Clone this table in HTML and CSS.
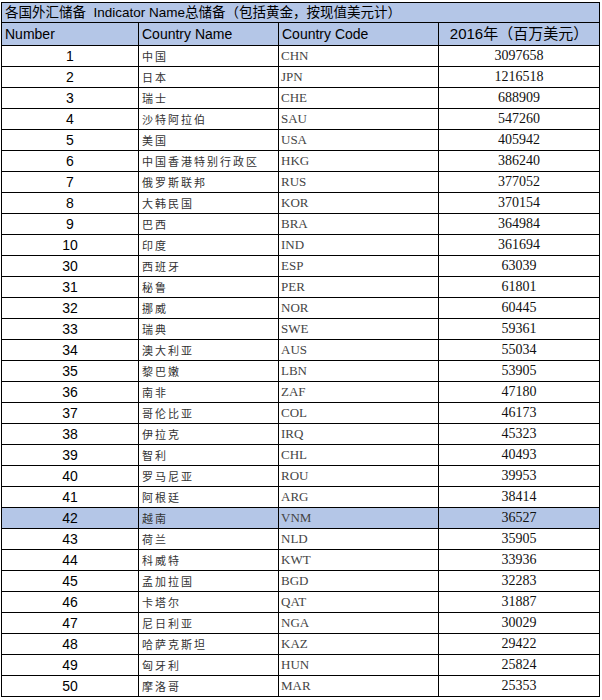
FILE: index.html
```html
<!DOCTYPE html>
<html lang="zh">
<head>
<meta charset="utf-8">
<title>各国外汇储备</title>
<link rel="stylesheet" href="styles.css">
</head>
<body>
<table class="sheet">
  <colgroup>
    <col class="c-num">
    <col class="c-name">
    <col class="c-code">
    <col class="c-val">
  </colgroup>
  <thead>
    <tr class="title-row"><td colspan="4">各国外汇储备&nbsp;&nbsp;Indicator Name总储备（包括黄金，按现值美元计）</td></tr>
    <tr class="head-row">
      <td>Number</td>
      <td>Country Name</td>
      <td>Country Code</td>
      <td class="h-year">2016年（百万美元）</td>
    </tr>
  </thead>
  <tbody>
    <tr><td class="num">1</td><td class="name">中国</td><td class="code">CHN</td><td class="val">3097658</td></tr>
    <tr><td class="num">2</td><td class="name">日本</td><td class="code">JPN</td><td class="val">1216518</td></tr>
    <tr><td class="num">3</td><td class="name">瑞士</td><td class="code">CHE</td><td class="val">688909</td></tr>
    <tr><td class="num">4</td><td class="name">沙特阿拉伯</td><td class="code">SAU</td><td class="val">547260</td></tr>
    <tr><td class="num">5</td><td class="name">美国</td><td class="code">USA</td><td class="val">405942</td></tr>
    <tr><td class="num">6</td><td class="name">中国香港特别行政区</td><td class="code">HKG</td><td class="val">386240</td></tr>
    <tr><td class="num">7</td><td class="name">俄罗斯联邦</td><td class="code">RUS</td><td class="val">377052</td></tr>
    <tr><td class="num">8</td><td class="name">大韩民国</td><td class="code">KOR</td><td class="val">370154</td></tr>
    <tr><td class="num">9</td><td class="name">巴西</td><td class="code">BRA</td><td class="val">364984</td></tr>
    <tr><td class="num">10</td><td class="name">印度</td><td class="code">IND</td><td class="val">361694</td></tr>
    <tr><td class="num">30</td><td class="name">西班牙</td><td class="code">ESP</td><td class="val">63039</td></tr>
    <tr><td class="num">31</td><td class="name">秘鲁</td><td class="code">PER</td><td class="val">61801</td></tr>
    <tr><td class="num">32</td><td class="name">挪威</td><td class="code">NOR</td><td class="val">60445</td></tr>
    <tr><td class="num">33</td><td class="name">瑞典</td><td class="code">SWE</td><td class="val">59361</td></tr>
    <tr><td class="num">34</td><td class="name">澳大利亚</td><td class="code">AUS</td><td class="val">55034</td></tr>
    <tr><td class="num">35</td><td class="name">黎巴嫩</td><td class="code">LBN</td><td class="val">53905</td></tr>
    <tr><td class="num">36</td><td class="name">南非</td><td class="code">ZAF</td><td class="val">47180</td></tr>
    <tr><td class="num">37</td><td class="name">哥伦比亚</td><td class="code">COL</td><td class="val">46173</td></tr>
    <tr><td class="num">38</td><td class="name">伊拉克</td><td class="code">IRQ</td><td class="val">45323</td></tr>
    <tr><td class="num">39</td><td class="name">智利</td><td class="code">CHL</td><td class="val">40493</td></tr>
    <tr><td class="num">40</td><td class="name">罗马尼亚</td><td class="code">ROU</td><td class="val">39953</td></tr>
    <tr><td class="num">41</td><td class="name">阿根廷</td><td class="code">ARG</td><td class="val">38414</td></tr>
    <tr class="hl"><td class="num">42</td><td class="name">越南</td><td class="code">VNM</td><td class="val">36527</td></tr>
    <tr><td class="num">43</td><td class="name">荷兰</td><td class="code">NLD</td><td class="val">35905</td></tr>
    <tr><td class="num">44</td><td class="name">科威特</td><td class="code">KWT</td><td class="val">33936</td></tr>
    <tr><td class="num">45</td><td class="name">孟加拉国</td><td class="code">BGD</td><td class="val">32283</td></tr>
    <tr><td class="num">46</td><td class="name">卡塔尔</td><td class="code">QAT</td><td class="val">31887</td></tr>
    <tr><td class="num">47</td><td class="name">尼日利亚</td><td class="code">NGA</td><td class="val">30029</td></tr>
    <tr><td class="num">48</td><td class="name">哈萨克斯坦</td><td class="code">KAZ</td><td class="val">29422</td></tr>
    <tr><td class="num">49</td><td class="name">匈牙利</td><td class="code">HUN</td><td class="val">25824</td></tr>
    <tr><td class="num">50</td><td class="name">摩洛哥</td><td class="code">MAR</td><td class="val">25353</td></tr>
  </tbody>
</table>
</body>
</html>
```

FILE: styles.css
```css
html, body {
  margin: 0;
  padding: 0;
  background: #ffffff;
}

body {
  padding: 2px 0 0 1px;
  font-family: "Liberation Sans", "Noto Sans CJK SC", sans-serif;
  color: #000;
}

.sheet {
  border-collapse: collapse;
  table-layout: fixed;
  width: 598px;
}

.c-num { width: 137px; }
.c-name { width: 140px; }
.c-code { width: 160px; }
.c-val { width: 161px; }

.sheet td {
  border: 1px solid #000;
  padding: 0 0 0 3px;
  white-space: nowrap;
  overflow: hidden;
  vertical-align: middle;
}

.title-row td {
  background: #b4c6e7;
  height: 19px;
  line-height: 19px;
  font-size: 13.5px;
  padding-left: 3px;
}

.head-row td {
  background: #b4c6e7;
  height: 22px;
  line-height: 22px;
  font-size: 14px;
}

.head-row .h-year {
  font-size: 15px;
  text-align: center;
  padding: 0;
}

tbody td {
  height: 20px;
  line-height: 20px;
}

.num {
  font-family: "Liberation Sans", sans-serif;
  font-size: 14px;
  text-align: center;
  padding: 0 !important;
}

.name {
  font-family: "Noto Sans CJK SC", sans-serif;
  font-size: 11px;
  letter-spacing: 2px;
  color: #333;
}

.code {
  font-family: "Liberation Serif", serif;
  font-size: 13px;
  color: #444;
  padding-left: 2px !important;
}

.val {
  font-family: "Liberation Serif", serif;
  font-size: 14px;
  text-align: center;
  padding: 0 !important;
  color: #111;
}

.hl td {
  background: #b4c6e7;
}
```
